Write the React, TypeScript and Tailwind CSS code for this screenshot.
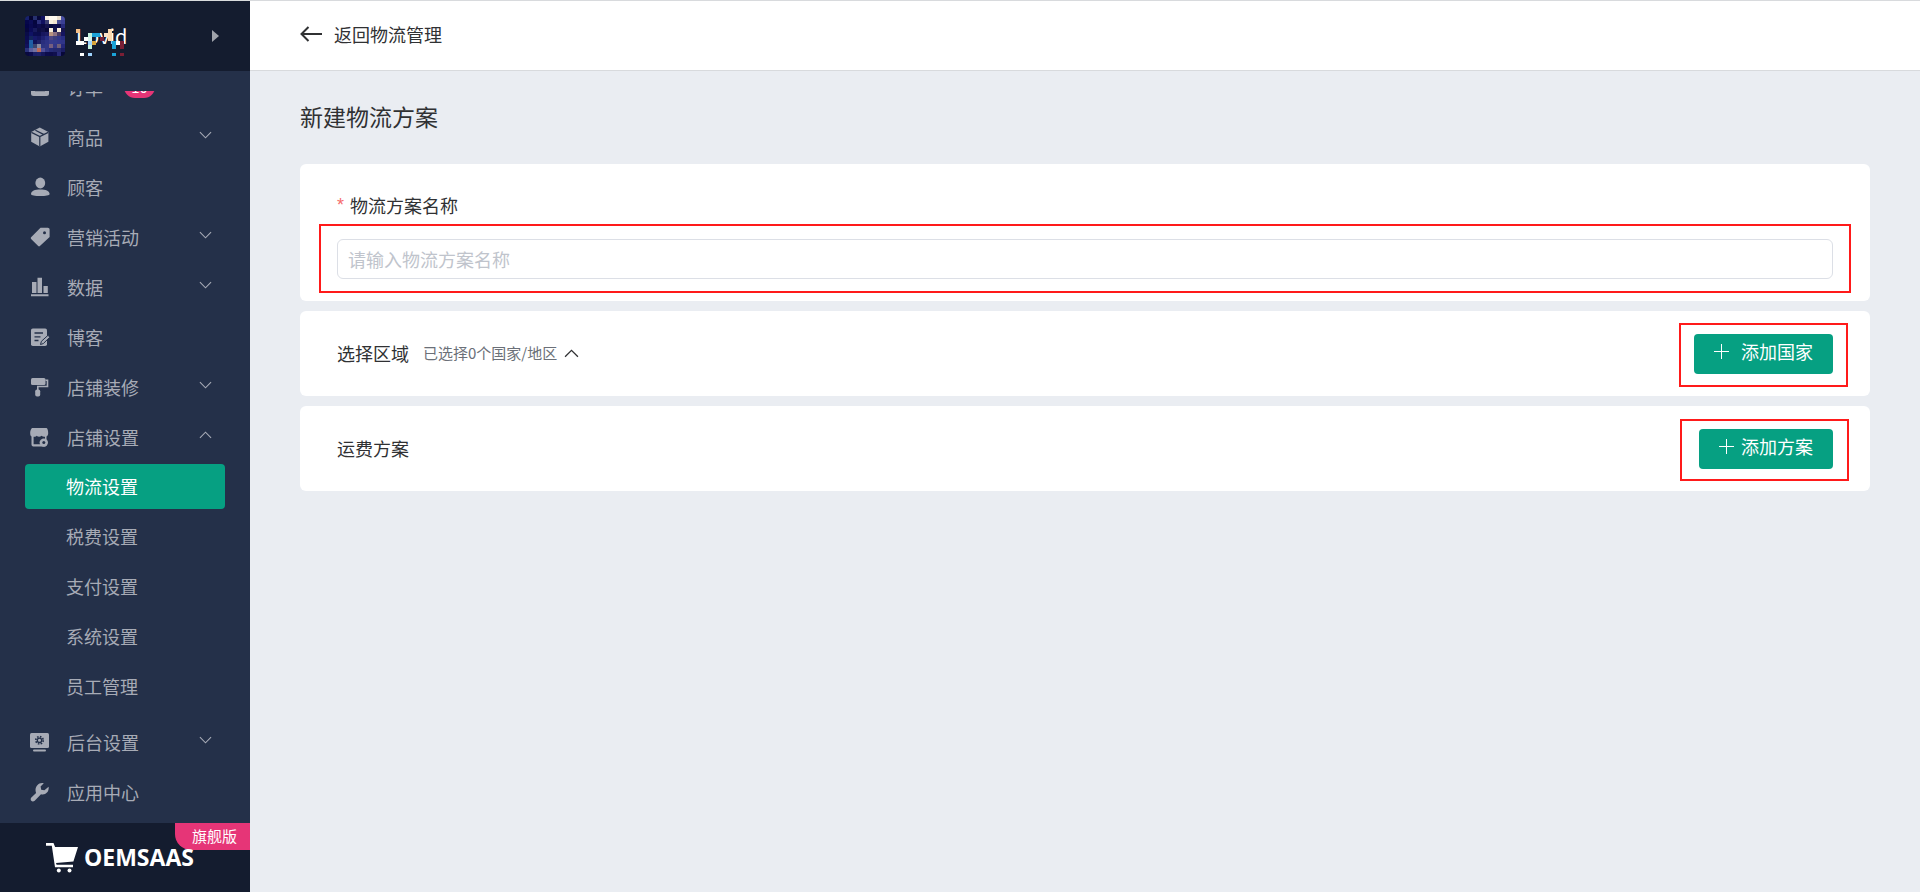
import type { ReactNode } from 'react'

type Item = {
  label: string
  icon: ReactNode
  arrow?: 'down' | 'up'
  badge?: string
  children?: string[]
}

const svg = (children: ReactNode) => (
  <svg viewBox="0 0 20 20" className="size-5 shrink-0" fill="currentColor" aria-hidden="true">
    {children}
  </svg>
)

const menu: Item[] = [
  {
    label: '订单',
    badge: '10',
    icon: svg(
      <>
        <rect x="1" y="2" width="18" height="17" rx="2.5" />
        <path d="M5 7h10M5 13.5h10" stroke="#243049" strokeWidth="1.4" />
      </>,
    ),
  },
  {
    label: '商品',
    arrow: 'down',
    icon: svg(
      <>
        <path d="M9.8.6 18.4 5v9.8l-8.6 4.8-8.6-4.8V5z" />
        <path d="m1.4 5.4 8.400 4.200 8.400-4.200M9.800 9.600v10M5.400 3.200l8.600 4.400" stroke="#243049" strokeWidth="1.2" fill="none" />
      </>,
    ),
  },
  {
    label: '顾客',
    icon: svg(
      <>
        <ellipse cx="10.3" cy="6" rx="4.9" ry="5.4" />
        <path d="M1 17c0-3.2 4-4.6 9.3-4.6s9.300 1.400 9.300 4.600c0 1.600-4 2-9.300 2S1 18.600 1 17z" />
      </>,
    ),
  },
  {
    label: '营销活动',
    arrow: 'down',
    icon: svg(
      <>
        <path d="M10.5.8h7.300c1 0 1.800.8 1.800 1.800v7.300L9.900 19.100a1.200 1.200 0 0 1-1.700 0L1.100 12a1.200 1.200 0 0 1 0-1.700z" />
        <circle cx="14.5" cy="5.8" r="1.5" fill="#243049" />
      </>,
    ),
  },
  {
    label: '数据',
    arrow: 'down',
    icon: svg(
      <path d="M2 5h4.500v11H2zM7.500.8H12V16H7.500zM13.500 9h4.300v7h-4.300zM1 17.200h17.500v2H1z" />,
    ),
  },
  {
    label: '博客',
    icon: svg(
      <>
        <rect x="1" y="1.5" width="16" height="17.5" rx="1.8" />
        <path d="M4.500 6h8.500M4.500 9.800h6M4.500 13.500h4" stroke="#243049" strokeWidth="1.3" />
        <path d="m10.500 17.500.9-3.200 6.600-6 1.800 1.900-6.400 6.300z" stroke="#243049" strokeWidth="1" />
      </>,
    ),
  },
  {
    label: '店铺装修',
    arrow: 'down',
    icon: svg(
      <>
        <rect x="1" y="1" width="14.5" height="7" rx="1.5" />
        <path d="M15.500 3.200h2v6.300H7.800v4" stroke="currentColor" strokeWidth="1.6" fill="none" />
        <rect x="5.2" y="12.5" width="5" height="7" rx="1.8" />
      </>,
    ),
  },
  {
    label: '店铺设置',
    arrow: 'up',
    children: ['物流设置', '税费设置', '支付设置', '系统设置', '员工管理'],
    icon: svg(
      <>
        <path d="M2.500 1h14c1 0 1.700 2.800 1.700 5.200 0 1.600-.7 2.800-1.700 3.300v8c0 1-.7 1.900-1.700 1.900H3.200c-1 0-1.700-.8-1.700-1.900v-8C.7 9 .2 8 .2 6.200.2 3.800 1.200 1 2.500 1z" />
        <path d="M3.600 9.800c1.500.2 2.500-.1 3-1 1.500 1.200 3.500 1.200 5 0 .8.900 2 1.200 3.400 1v2.500l-4.200 2.200v2.700H3.600z" fill="#243049" />
        <circle cx="13.8" cy="15.6" r="4.2" />
        <circle cx="13.8" cy="15.6" r="1.5" fill="#243049" />
      </>,
    ),
  },
  {
    label: '后台设置',
    arrow: 'down',
    icon: svg(
      <>
        <rect x="0" y="1" width="19" height="15" rx="1.5" />
        <rect x="3" y="17.5" width="13" height="2" rx="1" />
        <circle cx="9.5" cy="8.3" r="3.7" fill="none" stroke="#243049" strokeWidth="1.6" strokeDasharray="1.6 1.3" />
        <circle cx="9.5" cy="8.3" r="2.2" fill="none" stroke="#243049" strokeWidth="1.3" />
      </>,
    ),
  },
  {
    label: '应用中心',
    icon: svg(
      <path d="M13.800 1.200 10.600 4.500l.6 3.200 3.200.6 4.200-3.500c.8 5-3 8.700-7.600 7.500l-6.300 6.500c-2.600 1.800-5-.6-3.600-3.100l5-4.700C3.900 5.800 8.200-.4 13.800 1.200z" />,
    ),
  },
]

const avatarPixels = [
  '#17206b#050530#26306d#070839#10115f#f6efe2#fffaf0#fffaf0#eadfce#4a4fa2',
  '#06074a#0b0c56#05063e#2b2f7c#101060#3b3e70#f9f0df#f3e5cf#4b4e92#3a3f95',
  '#040447#0a0a50#060645#0d0c4e#0a0941#15144f#080a3c#11104a#0c0b47#262a7a',
  '#07073e#0b0b57#171a5c#0c0d44#111047#080739#f4e8d5#14154b#f9ecd7#17154e',
  '#0a0c48#0f1264#0b0d4f#0b0c4d#17165e#1c1b62#b99381#8e7181#4b3a62#151560',
  '#0b0c51#13255c#16196a#14155f#1e2070#272c83#4e4581#3b3c7c#313588#292e83',
  '#0f0e53#1f5fa6#101358#1d2065#292e7c#2d3385#383b8b#333a8d#32368b#303587',
  '#11115c#1e5fa0#3a4470#87899f#2c3481#303583#765f80#333687#6f5f78#252879',
  '#29317b#5c5f9f#7472a0#bd6957#504f98#303684#252b78#24286f#24296d#1b1d63',
  '#09093f#0b0b4b#1b1f65#1d2268#15185b#0d0d4c#0d0c49#10104f#292b7a#08083a',
].map((row) => row.match(/#.{6}/g) ?? [])

// [column, row, colour] of the blocks scattered over the shop name
const nameBlocks: [number, number, string][] = [
  [0, 0, '#f5c089'], [8, 0, '#fbd9b0'],
  [2, 1, '#0d1a2e'], [3, 1, '#c5f2dc'], [4, 1, '#1ba3d8'], [5, 1, '#1ba3d8'], [7, 1, '#fbe2c8'], [8, 1, '#fbd9b0'],
  [2, 2, '#ffffff'], [3, 2, '#d8f6ec'], [6, 2, '#7a1f35'], [8, 2, '#fbd9b0'],
  [0, 3, '#ffffff'], [1, 3, '#ffffff'], [3, 3, '#9fd4ff'], [4, 3, '#d9a53a'], [9, 3, '#1ba3d8'], [10, 3, '#ffffff'], [11, 3, '#7a1f35'],
  [3, 4, '#c5f2dc'], [9, 4, '#1ba3d8'], [11, 4, '#7a1f35'],
  [1, 6, '#ffffff'], [3, 6, '#9fd4ff'], [9, 6, '#1ba3d8'], [11, 6, '#7a1f35'],
]

function Arrow({ up, className }: { up?: boolean; className?: string }) {
  return (
    <svg viewBox="0 0 14 8" className={className} fill="none" stroke="currentColor" strokeWidth="1.2" aria-hidden="true">
      <path d={up ? 'M1 7l6-6 6 6' : 'M1 1l6 6 6-6'} />
    </svg>
  )
}

function Plus() {
  return (
    <svg viewBox="0 0 15 15" className="size-[15px]" fill="none" stroke="currentColor" strokeWidth="1" aria-hidden="true">
      <path d="M7.500 0v15M0 7.500h15" />
    </svg>
  )
}

// red frame around the control that the guide points at
function Highlight({ className }: { className: string }) {
  return <span className={`pointer-events-none absolute border-2 border-[#ff1a1a] ${className}`} />
}

function Sidebar() {
  return (
    <aside className="flex w-[250px] shrink-0 flex-col bg-[#243049] text-[#a7abb6]">
      <div className="flex h-[71px] shrink-0 items-center border-t border-[#d9dcdd] bg-[#141c2f] pr-[31px] pl-[25px]">
        <svg viewBox="0 0 10 10" className="size-10 rounded" shapeRendering="crispEdges" aria-hidden="true">
          {avatarPixels.map((row, y) =>
            row.map((fill, x) => <rect key={`${x}-${y}`} x={x} y={y} width="1" height="1" fill={fill} />),
          )}
        </svg>
        <div className="relative ml-[11px] text-xl text-white">
          Lpvid
          <svg viewBox="0 0 12 7" className="absolute top-[7px] left-0 h-7 w-12" shapeRendering="crispEdges" aria-hidden="true">
            {nameBlocks.map(([x, y, fill]) => (
              <rect key={`${x}-${y}`} x={x} y={y} width="1" height={y === 6 ? 0.7 : 1} fill={fill} />
            ))}
          </svg>
        </div>
        <button type="button" aria-label="展开" className="ml-auto">
          <svg viewBox="0 0 7 12" className="h-3 w-[7px]" fill="#a0a3ab">
            <path d="M0 0l7 6-7 6z" />
          </svg>
        </button>
      </div>

      <nav className="mt-5 flex min-h-0 flex-1 flex-col justify-end overflow-hidden pb-[6px]">
        {menu.map((item) => (
          <div key={item.label} className="shrink-0">
            <a href="#" className="flex h-[50px] items-center pr-[38px] pl-[30px] text-[18px]">
              {item.icon}
              <span className="ml-[17px]">{item.label}</span>
              {item.badge && (
                <span className="ml-[21px] flex h-[22px] w-[31px] items-center justify-center rounded-full bg-[#e63577] text-[15px] text-white">
                  {item.badge}
                </span>
              )}
              {item.arrow && <Arrow up={item.arrow === 'up'} className="mb-1 ml-auto h-2 w-[13px]" />}
            </a>
            {item.children && (
              <div className="flex flex-col gap-[5px] px-[25px] pt-[2px] pb-2">
                {item.children.map((child, i) => (
                  <a
                    key={child}
                    href="#"
                    className={`flex h-[45px] items-center rounded pl-[41px] text-[18px] ${i === 0 ? 'bg-[#06a082] text-white' : ''}`}
                  >
                    {child}
                  </a>
                ))}
              </div>
            )}
          </div>
        ))}
      </nav>

      <div className="relative flex h-[69px] shrink-0 items-center gap-[6px] bg-[#141c2f] pl-[46px]">
        <span className="absolute top-0 right-0 flex h-[27px] w-[75px] items-center justify-center rounded-bl-2xl bg-[#e63577] pl-1 text-[15px] text-white">
          旗舰版
        </span>
        <svg viewBox="0 0 32 30" className="h-[30px] w-8" fill="white" aria-hidden="true">
          <path d="M0 0h7.500l1.600 4H32l-4.600 14.500-17.400 1.500.6 1.800H27v2.500H9L5.800 2.700H0z" />
          <circle cx="12.8" cy="27.5" r="2" />
          <circle cx="23.5" cy="27.5" r="2" />
        </svg>
        <span className="relative font-['Open_Sans','Noto_Sans',sans-serif] text-[23px] font-bold text-white">OEMSAAS</span>
      </div>
    </aside>
  )
}

export default function App() {
  return (
    <div className="flex h-screen font-['Noto_Sans_CJK_SC',sans-serif] text-[#303133]">
      <Sidebar />

      <div className="min-w-0 flex-1 bg-[#eaedf2]">
        <header className="flex h-[71px] items-center border-y border-[#d8dadd] bg-white px-[50px] pb-[3px]">
          <a href="#" className="flex items-center gap-3 text-[18px]">
            <svg viewBox="0 0 22 16" className="h-4 w-[22px]" fill="none" stroke="currentColor" strokeWidth="2" aria-hidden="true">
              <path d="M22 8H1.500M8.500 1l-7 7 7 7" />
            </svg>
            返回物流管理
          </a>
        </header>

        <main className="px-[50px] pt-7">
          <h1 className="text-[23px] leading-[34px]">新建物流方案</h1>

          <div className="mt-[31px] flex flex-col gap-[10px]">
            <section className="rounded-md bg-white px-[37px] pt-[27px] pb-[22px]">
              <label htmlFor="plan-name" className="flex items-center text-[18px] leading-7">
                <span className="mr-[6px] font-['Liberation_Sans',sans-serif] text-[#f56c6c]">*</span>
                物流方案名称
              </label>
              <div className="relative mt-5">
                <input
                  id="plan-name"
                  type="text"
                  placeholder="请输入物流方案名称"
                  className="block h-10 w-full rounded-md border border-[#dcdfe6] bg-white px-[10px] text-[18px] placeholder:text-[#c0c4cc]"
                />
                <Highlight className="-inset-x-[18px] -top-[15px] -bottom-[14px]" />
              </div>
            </section>

            <section className="flex h-[85px] items-center rounded-md bg-white px-[37px]">
              <h2 className="text-[18px]">选择区域</h2>
              <button type="button" className="ml-[14px] flex items-center gap-[7px] text-[15px] text-[#6b7078]">
                已选择0个国家/地区
                <Arrow up className="h-[9px] w-[15px] text-[#303133]" />
              </button>
              <div className="relative ml-auto">
                <button type="button" className="flex h-10 items-center gap-3 rounded bg-[#06a082] px-5 pb-1 text-[18px] text-white">
                  <Plus />
                  添加国家
                </button>
                <Highlight className="-top-[11px] -right-[15px] -bottom-[13px] -left-[15px]" />
              </div>
            </section>

            <section className="flex h-[85px] items-center rounded-md bg-white px-[37px]">
              <h2 className="text-[18px]">运费方案</h2>
              <div className="relative ml-auto">
                <button type="button" className="flex h-10 items-center gap-[7px] rounded bg-[#06a082] px-5 pb-1 text-[18px] text-white">
                  <Plus />
                  添加方案
                </button>
                <Highlight className="-top-[10px] -right-4 -bottom-3 -left-[19px]" />
              </div>
            </section>
          </div>
        </main>
      </div>
    </div>
  )
}
